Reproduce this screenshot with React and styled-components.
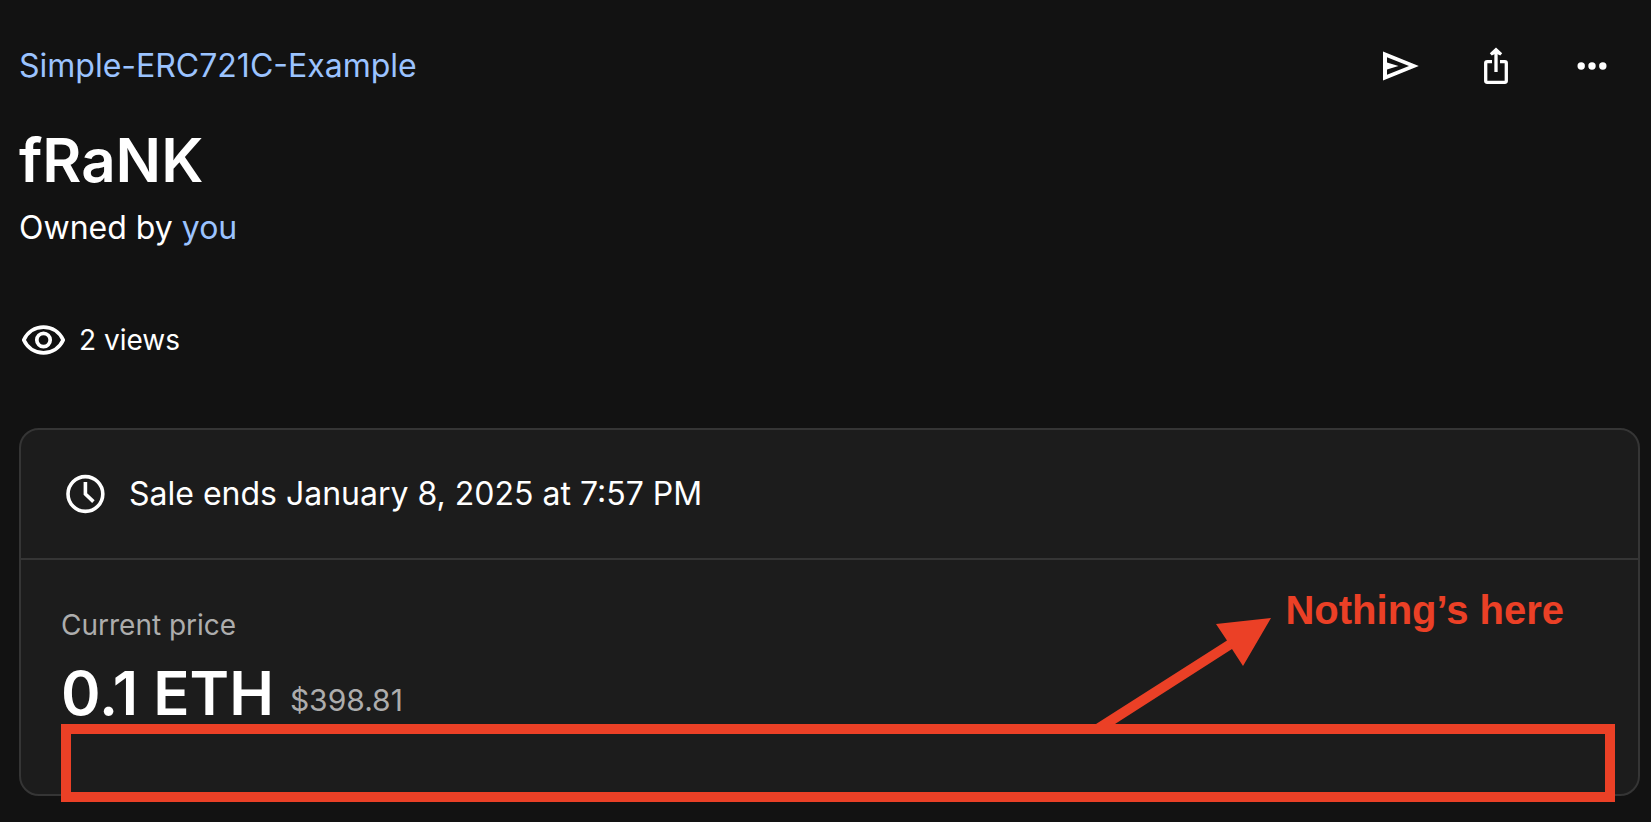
import React from "react";
import styled, { createGlobalStyle } from "styled-components";

const Global = createGlobalStyle`
  * { box-sizing: border-box; }
  body { margin: 0; background: #121212; }
`;

const ink = "#ffffff";
const link = "#9bc3ff";
const muted = "#adadad";
const line = "#353535";
const mark = "#eb4026";

const Page = styled.main`
  min-height: 100vh;
  padding: 38px 11px 26px 19px;
  background: #121212;
  color: ${ink};
  font-family: Inter, "Liberation Sans", sans-serif;
  font-size: 32px;
  font-weight: 400;
  line-height: 48px;
`;

const TopBar = styled.header`
  display: flex;
  align-items: center;
  justify-content: space-between;
  height: 56px;
  padding-right: 24px;
`;

const TextLink = styled.a`
  color: ${link};
  text-decoration: none;
`;

const Actions = styled.div`
  display: flex;
  gap: 48px;
`;

const IconButton = styled.button`
  display: flex;
  width: 48px;
  height: 48px;
  padding: 0;
  border: 0;
  background: none;
  color: inherit;
  cursor: pointer;
`;

const Title = styled.h1`
  margin: 30px 0 0;
  font-size: 60px;
  font-weight: 600;
  line-height: 72px;
`;

const Owner = styled.p`
  margin: 8px 0 0;
`;

const Views = styled.p`
  display: flex;
  align-items: center;
  gap: 12px;
  margin: 64px 0 64px;
  font-size: 28px;
`;

const Card = styled.section`
  border: 2px solid ${line};
  border-radius: 20px;
  background: #1c1c1c;
`;

const SaleEnds = styled.div`
  display: flex;
  align-items: center;
  gap: 20px;
  padding: 40px;
  border-bottom: 2px solid ${line};
`;

const PriceArea = styled.div`
  position: relative;
  padding: 40px 40px 58px;
`;

const Label = styled.div`
  color: ${muted};
  font-size: 28px;
  line-height: 50px;
`;

const PriceRow = styled.div`
  display: flex;
  align-items: flex-end;
  gap: 16px;
`;

const Price = styled.strong`
  font-size: 60px;
  font-weight: 600;
  line-height: 86px;
`;

const Usd = styled.span`
  color: ${muted};
  font-size: 30px;
  line-height: 72px;
`;

const EmptyBox = styled.div`
  position: absolute;
  left: 40px;
  right: 23px;
  bottom: -8px;
  height: 78px;
  border: 10px solid ${mark};
`;

const Note = styled.div`
  position: absolute;
  top: 26px;
  right: 74px;
  color: ${mark};
  font: 700 40px/48px "Liberation Sans", sans-serif;
  white-space: nowrap;
`;

const Arrow = styled.svg`
  position: absolute;
  top: 58px;
  right: 366px;
`;

const Icon = ({ children }) => (
  <svg width="48" height="48" viewBox="0 0 48 48" fill="none" stroke="currentColor" aria-hidden="true">
    {children}
  </svg>
);

export default function App() {
  return (
    <>
      <Global />
      <Page>
        <TopBar>
          <TextLink href="#collection">Simple-ERC721C-Example</TextLink>
          <Actions>
            <IconButton type="button" aria-label="Transfer">
              <Icon>
                <path fill="currentColor" stroke="none" fillRule="evenodd" d="M7 9.600v28.800L42.800 24ZM11 15.200 33 24 11 32.800v-5.400L22.500 24 11 20.600Z" />
              </Icon>
            </IconButton>
            <IconButton type="button" aria-label="Share">
              <Icon>
                <path strokeWidth="3.300" d="M20 19.600h-4.800a1.500 1.500 0 0 0-1.500 1.500v17.700a1.500 1.500 0 0 0 1.500 1.500h17.600a1.500 1.500 0 0 0 1.500-1.500V21.100a1.500 1.500 0 0 0-1.500-1.500H28M24 30V9" />
                <path fill="currentColor" stroke="none" d="M24 5.600 30.200 11.300 28.300 13.600 24 11.600 19.700 13.600 17.800 11.300Z" />
              </Icon>
            </IconButton>
            <IconButton type="button" aria-label="More">
              <Icon>
                <g fill="currentColor" stroke="none">
                  <circle cx="13.200" cy="24" r="3.700" />
                  <circle cx="24" cy="24" r="3.700" />
                  <circle cx="34.800" cy="24" r="3.700" />
                </g>
              </Icon>
            </IconButton>
          </Actions>
        </TopBar>
        <Title>fRaNK</Title>
        <Owner>
          Owned by <TextLink href="#you">you</TextLink>
        </Owner>
        <Views>
          <Icon>
            <path strokeWidth="3.800" strokeLinejoin="round" d="M4.800 24C8.500 16 16 11.200 24.500 11.200S40.500 16 44.200 24C40.500 32 33 36.800 24.500 36.800S8.500 32 4.800 24Z" />
            <circle cx="24.500" cy="24" r="6.700" strokeWidth="3.700" />
          </Icon>
          2 views
        </Views>
        <Card>
          <SaleEnds>
            <Icon>
              <circle cx="24.400" cy="24" r="17.400" strokeWidth="3.600" />
              <path strokeWidth="3.600" d="M24.400 12v12l8 7.600" />
            </Icon>
            Sale ends January 8, 2025 at 7:57 PM
          </SaleEnds>
          <PriceArea>
            <Label>Current price</Label>
            <PriceRow>
              <Price>0.1 ETH</Price>
              <Usd>$398.81</Usd>
            </PriceRow>
            <Arrow width="176" height="108" viewBox="0 0 176 108" fill={mark} aria-hidden="true">
              <path d="M175 0 120 6l11 16.500L0 106h19L136 31l11 17Z" />
            </Arrow>
            <EmptyBox />
            <Note>Nothing’s here</Note>
          </PriceArea>
        </Card>
      </Page>
    </>
  );
}
